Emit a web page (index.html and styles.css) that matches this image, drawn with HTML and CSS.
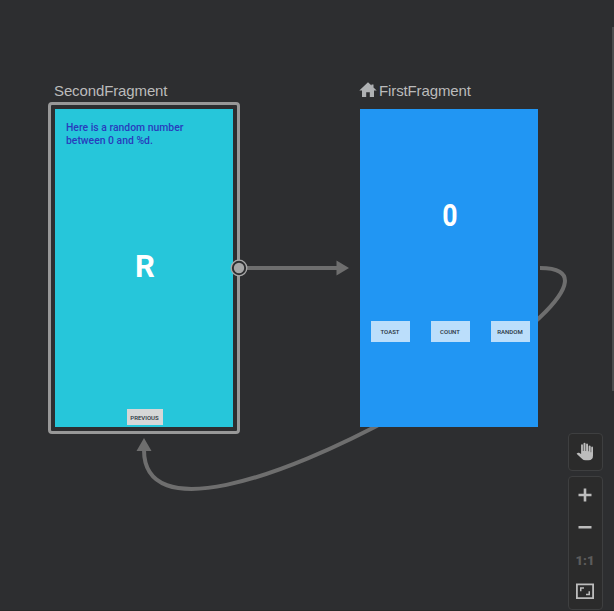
FILE: index.html
```html
<!DOCTYPE html>
<html lang="en">
<head>
<meta charset="utf-8">
<title>Navigation editor</title>
<link rel="stylesheet" href="styles.css">
</head>
<body>
<main class="canvas">
  <svg class="edges" viewBox="0 0 614 611">
    <path class="edge" d="M540 268C686 268 144 600 144 450"/>
    <path class="edge" d="M247 268H337"/>
    <path class="head" d="M336.500 260.500L349 268L336.500 275.500ZM136.500 451L144 438L151.500 451Z"/>
  </svg>

  <section class="node node-second">
    <h2 class="node-title">SecondFragment</h2>
    <div class="frame">
      <div class="screen screen-second">
        <p class="hint">Here is a random number<br>between 0 and %d.</p>
        <div class="letter">R</div>
        <div class="btn btn-previous">PREVIOUS</div>
      </div>
    </div>
    <svg class="handle" viewBox="0 0 18 18">
      <circle cx="9" cy="9" r="7.800" fill="#2d2e30" stroke="#a8a8a8" stroke-width="1.300"/>
      <circle cx="9" cy="9" r="5.200" fill="#a6a6a6"/>
    </svg>
  </section>

  <section class="node node-first">
    <h2 class="node-title">
      <svg class="home" viewBox="0 0 18 16"><path d="M9 .3L.3 8.600H3V15H7.200V10.300H10.800V15H15V8.600H17.700L14.500 5.500V2.500H12.500V3.600Z"/></svg>
      <span>FirstFragment</span>
    </h2>
    <div class="screen screen-first">
      <div class="digit">0</div>
      <div class="actions">
        <div class="btn">TOAST</div>
        <div class="btn">COUNT</div>
        <div class="btn">RANDOM</div>
      </div>
    </div>
  </section>

  <div class="scrollbar"></div>

  <nav class="tools">
    <div class="tool-group">
      <svg class="icon" viewBox="0 0 18 20"><path d="M5.100 10.800V3.200Q5.100 2.200 6 2.200T6.900 3.200V9H7.500V1.800Q7.500.8 8.500.8T9.500 1.800V9H10.100V2.400Q10.100 1.500 11 1.500T12 2.400V9.300H12.600V4.600Q12.600 3.600 13.600 3.600T14.700 4.600V13.500Q14.700 18.300 11.500 18.300H9.500Q7.400 18.300 6.200 16.900L.6 11.800L1.500 11Q2.200 10.500 3 10.800L5.100 12ZM14 10.300H15.200V5.600Q15.300 4.600 16.100 4.600T17 5.600V13.500Q17 18.300 12.500 18.300H11Z"/></svg>
    </div>
    <div class="tool-group tool-zoom">
      <svg class="icon" viewBox="0 0 18 20"><path d="M7.700 3.500H10.300V8.700H15.500V11.300H10.300V16.500H7.700V11.300H2.500V8.700H7.700Z"/></svg>
      <svg class="icon" viewBox="0 0 18 20"><path d="M2.500 9H15.500V11.500H2.500Z"/></svg>
      <span class="ratio">1:1</span>
      <svg class="icon" viewBox="0 0 18 20"><path fill-rule="evenodd" d="M0 2.500H18V18H0ZM1.800 4.300V16.200H16.200V4.300ZM4 6.300H8V7.800H5.500V10.300H4ZM14 14.300H10V12.800H12.500V10.300H14Z"/></svg>
    </div>
  </nav>
</main>
</body>
</html>
```

FILE: styles.css
```css
* {
  box-sizing: border-box;
}

body {
  margin: 0;
  background: #2d2e30;
}

.canvas {
  position: relative;
  width: 614px;
  height: 611px;
  overflow: hidden;
  background: #2d2e30;
  border-bottom: 1px solid #292929;
  font-family: Roboto, sans-serif;
}

.edges {
  position: absolute;
  inset: 0;
  width: 614px;
  height: 611px;
}

.edge {
  fill: none;
  stroke: #6e6e6e;
  stroke-width: 4;
}

.head {
  fill: #6e6e6e;
}

.node {
  position: absolute;
  top: 82px;
}

.node-second {
  left: 48px;
}

.node-first {
  left: 360px;
}

.node-title {
  display: flex;
  gap: 2px;
  height: 18px;
  margin: 0;
  font: 400 15px/18px "Liberation Sans", sans-serif;
  letter-spacing: -.12px;
  color: #bbb;
  white-space: nowrap;
}

.node-second .node-title {
  padding-left: 6px;
}

.node-first .node-title {
  height: 27px;
  margin-left: -1px;
}

.home {
  width: 18px;
  height: 16px;
  fill: #afb1b3;
}

.frame {
  width: 192px;
  height: 332px;
  margin-top: 2px;
  padding: 4px;
  border: 3px solid #989898;
  border-radius: 4px;
}

.screen {
  display: flex;
  flex-direction: column;
  width: 178px;
  height: 318px;
}

.screen-second {
  align-items: center;
  padding: 13px 0 2px;
  background: #26c6da;
}

.screen-first {
  align-items: center;
  padding-top: 87px;
  background: #2196f3;
}

.hint {
  align-self: flex-start;
  margin: 0 0 0 11px;
  font-size: 10.400px;
  font-weight: 500;
  line-height: 12.500px;
  color: #283cbd;
}

.letter,
.digit {
  font-size: 31px;
  font-weight: 700;
  line-height: 40px;
  color: #fff;
}

.letter {
  margin-top: 100px;
  margin-left: 2px;
}

.digit {
  margin-left: 2px;
  transform: scaleX(.86);
}

.actions {
  display: flex;
  gap: 21px;
  margin-top: 85px;
  margin-left: 2px;
}

.btn {
  width: 39px;
  height: 21px;
  background: #bbdefb;
  font-size: 6px;
  font-weight: 500;
  line-height: 21px;
  text-align: center;
  color: #26323c;
}

.btn-previous {
  width: 36px;
  height: 16px;
  margin-top: auto;
  margin-left: 1px;
  background: #d6d7d7;
  line-height: 17px;
}

.handle {
  position: absolute;
  top: 177px;
  left: 182px;
  width: 18px;
  height: 18px;
}

.scrollbar {
  position: absolute;
  top: 27px;
  right: 0;
  width: 2px;
  height: 364px;
  background: #4c4d4e;
}

.tools {
  position: absolute;
  top: 433px;
  left: 568px;
  display: flex;
  flex-direction: column;
  gap: 5px;
}

.tool-group {
  display: flex;
  flex-direction: column;
  align-items: center;
  gap: 12px;
  width: 35px;
  height: 38px;
  padding: 8px 1px 0 0;
  border: 1px solid #3e3f40;
  border-radius: 4px;
  background: #2b2b2b;
}

.tool-zoom {
  height: 134px;
}

.icon {
  flex: none;
  width: 18px;
  height: 20px;
  fill: #bcbcbc;
}

.ratio {
  height: 20px;
  font: 900 13px/23px Roboto, sans-serif;
  color: #5c5c5c;
}
```
